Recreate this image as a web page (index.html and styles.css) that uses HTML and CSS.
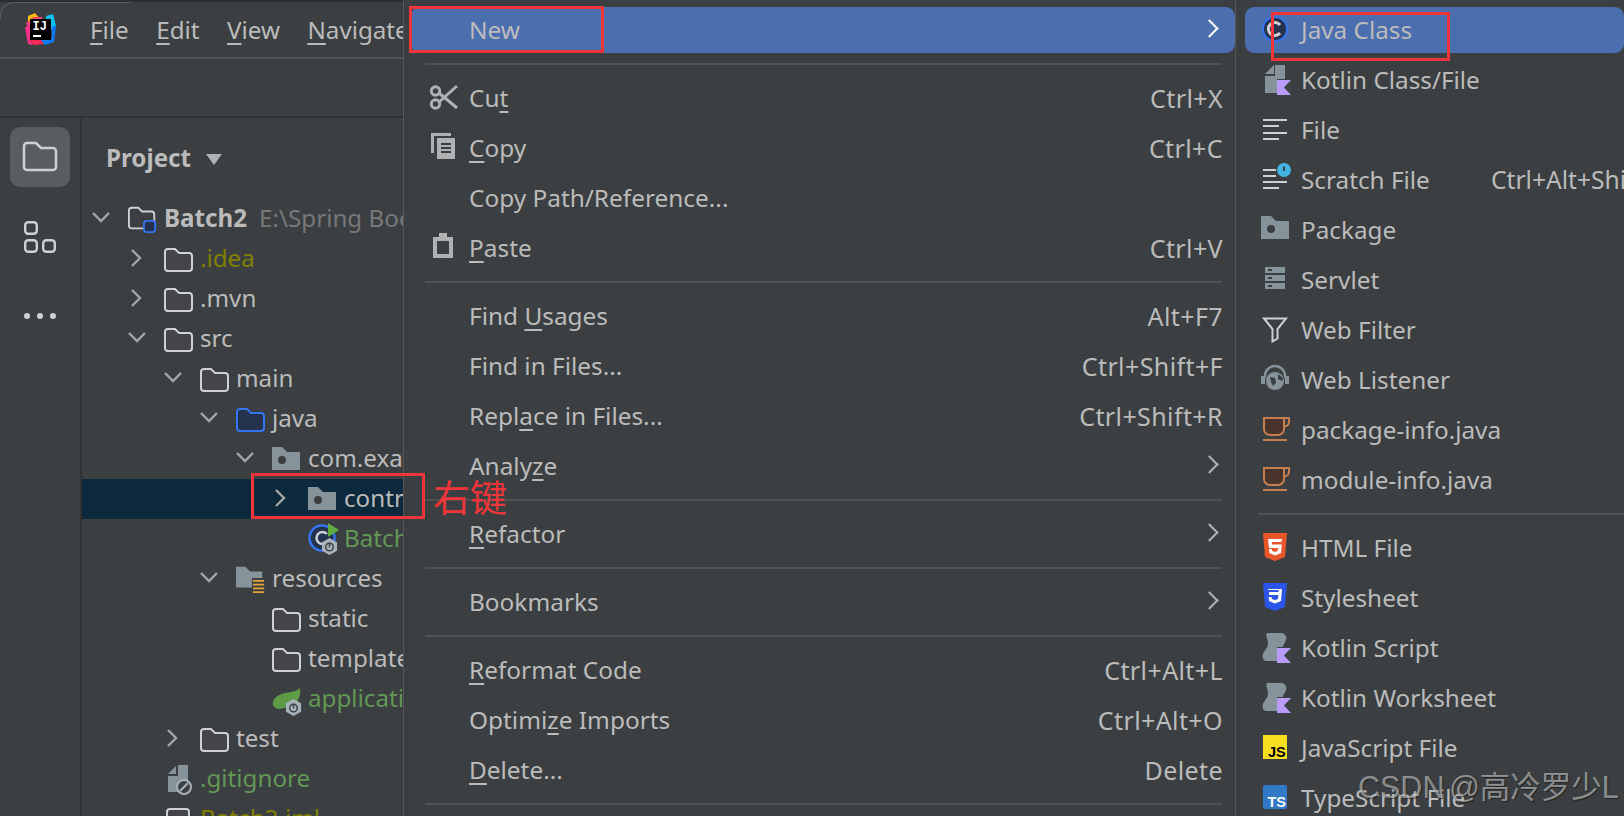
FILE: index.html
```html
<!DOCTYPE html>
<html lang="en">
<head>
<meta charset="utf-8">
<title>IntelliJ IDEA context menu</title>
<link rel="stylesheet" href="styles.css">
</head>
<body>
<svg class="sprite" aria-hidden="true">
  <symbol id="down" viewBox="0 0 36 30"><path d="M10 10l8 8 8-8" fill="none" stroke="#a3a6a9" stroke-width="2.4"/></symbol>
  <symbol id="right" viewBox="0 0 36 30"><path d="M13 7l8 8-8 8" fill="none" stroke="#a3a6a9" stroke-width="2.4"/></symbol>
  <symbol id="folder" viewBox="0 0 30 30"><path d="M4 6h7l4 4h10a3 3 0 0 1 3 3v12a3 3 0 0 1-3 3H4a3 3 0 0 1-3-3V9a3 3 0 0 1 3-3z" fill="#43454a" stroke="#ced0d6" stroke-width="2"/></symbol>
  <symbol id="jfolder" viewBox="0 0 30 30"><path d="M4 6h7l4 4h10a3 3 0 0 1 3 3v12a3 3 0 0 1-3 3H4a3 3 0 0 1-3-3V9a3 3 0 0 1 3-3z" fill="#25324d" stroke="#3574f0" stroke-width="2"/></symbol>
  <symbol id="pkg" viewBox="0 0 30 30"><path d="M0 4h10l5 5h13v18H0z" fill="#87939a"/><circle cx="10" cy="17" r="4" fill="#3c3f41"/></symbol>
  <symbol id="res" viewBox="0 0 32 32"><path d="M0 4h10l5 5h13v17H0z" fill="#87939a"/><path d="M17 16h15v17H17z" fill="#3c3f41"/><path d="M18 18h12v2H18zM18 22h12v2H18zM18 26h12v2H18zM18 30h12v2H18z" fill="#e2a63b"/></symbol>
  <symbol id="proj" viewBox="0 0 32 32"><path d="M4 5h7l4 4h10a3 3 0 0 1 3 3v12a3 3 0 0 1-3 3H4a3 3 0 0 1-3-3V8a3 3 0 0 1 3-3z" fill="none" stroke="#ced0d6" stroke-width="2"/><rect x="17" y="19" width="12" height="12" rx="3" fill="#25324d" stroke="#3574f0" stroke-width="2"/></symbol>
  <symbol id="gear" viewBox="0 0 18 18"><path d="M9 0l8 4.500v9L9 18l-8-4.500v-9z" fill="#a7b2ba"/><circle cx="9" cy="9.500" r="4" fill="none" stroke="#3c3f41" stroke-width="1.500"/><path d="M9 5v5" stroke="#3c3f41" stroke-width="1.500"/></symbol>
  <symbol id="cup" viewBox="0 0 30 30"><path d="M3 3h20v11a6 6 0 0 1-6 6H9a6 6 0 0 1-6-6z" fill="#4a332a" stroke="#c57e4f" stroke-width="2"/><path d="M23 3h5v4a4 4 0 0 1-5 4" fill="none" stroke="#c57e4f" stroke-width="2"/><path d="M2 25h24" stroke="#c57e4f" stroke-width="2"/></symbol>
  <symbol id="kfile" viewBox="0 0 30 30"><path d="M4 9l9-9v9z" fill="#87939a"/><path d="M14 0h10v14h-8v14H4V11h10z" fill="#87939a"/><path d="M16 15h14l-7 7.500 7 7.500H16z" fill="#b99bf8"/></symbol>
  <symbol id="kscript" viewBox="0 0 30 30"><path d="M6 0h13c5 0 7 3 6 7-1 3-3 5-3.500 7H16v14H6c-4 0-5-3-4-7 1-3 5-6 5-11 0-4-3-7-1-10z" fill="#87939a"/><path d="M16 15h14l-7 7.500 7 7.500H16z" fill="#b99bf8"/></symbol>
</svg>

<div class="app">
  <section class="ide">
    <header class="titlebar">
      <svg class="logo" viewBox="0 0 34 34" aria-hidden="true">
        <path d="M4 3l7-3 5 6-9 6-3-1z" fill="#fdb60d"/><path d="M2 10l8-6h8v3L4 15z" fill="#fb3d7c"/>
        <path d="M22 3l7-2 3 12-4 4-6-4z" fill="#07c3f2"/><path d="M28 13l4 0-2 16-9 3-5-5 12-2z" fill="#087cfa"/>
        <path d="M1 14l5-1v14l3 5-5-1z" fill="#ff318c"/><path d="M5 27h12l3 4-10 1z" fill="#fe2857"/>
        <rect x="6" y="6" width="21" height="21" fill="#000"/>
        <text x="8.500" y="16.500" class="logo-t">IJ</text><rect x="9" y="22" width="8" height="2" fill="#fff"/>
      </svg>
      <nav class="menubar">
        <span><u>F</u>ile</span><span><u>E</u>dit</span><span><u>V</u>iew</span><span><u>N</u>avigate</span>
      </nav>
    </header>
    <div class="toolbar"></div>
    <div class="body">
      <aside class="strip">
        <div class="strip-btn active">
          <svg class="strip-ic" viewBox="0 0 36 32" aria-hidden="true"><path d="M5 2h9l5 5h12a3 3 0 0 1 3 3v16a3 3 0 0 1-3 3H5a3 3 0 0 1-3-3V5a3 3 0 0 1 3-3z" fill="none" stroke="#ced0d6" stroke-width="2.500"/></svg>
        </div>
        <div class="strip-btn">
          <svg class="strip-grid" viewBox="0 0 32 32" aria-hidden="true"><g fill="none" stroke="#ced0d6" stroke-width="2.400"><rect x="1.200" y="1.200" width="11.600" height="11.600" rx="3"/><rect x="1.200" y="19.200" width="11.600" height="11.600" rx="3"/><rect x="19.200" y="19.200" width="11.600" height="11.600" rx="3"/></g></svg>
        </div>
        <div class="strip-dots"><i></i><i></i><i></i></div>
      </aside>
      <div class="panel">
        <div class="panel-head"><span class="panel-title">Project</span><span class="caret"></span></div>
        <div class="tree">
          <div class="row l0"><svg class="chev"><use href="#down"/></svg><svg class="ti"><use href="#proj"/></svg><b class="strong">Batch2</b><span class="hint">E:\Spring Boot\Batch2</span></div>
          <div class="row l1"><svg class="chev"><use href="#right"/></svg><svg class="ti"><use href="#folder"/></svg><span class="olive">.idea</span></div>
          <div class="row l1"><svg class="chev"><use href="#right"/></svg><svg class="ti"><use href="#folder"/></svg><span>.mvn</span></div>
          <div class="row l1"><svg class="chev"><use href="#down"/></svg><svg class="ti"><use href="#folder"/></svg><span>src</span></div>
          <div class="row l2"><svg class="chev"><use href="#down"/></svg><svg class="ti"><use href="#folder"/></svg><span>main</span></div>
          <div class="row l3"><svg class="chev"><use href="#down"/></svg><svg class="ti"><use href="#jfolder"/></svg><span>java</span></div>
          <div class="row l4"><svg class="chev"><use href="#down"/></svg><svg class="ti"><use href="#pkg"/></svg><span>com.example.batch2</span></div>
          <div class="row l5 selected"><svg class="chev"><use href="#right"/></svg><svg class="ti"><use href="#pkg"/></svg><span>controller</span></div>
          <div class="row l5"><span class="chev"></span>
            <svg class="ti" viewBox="0 0 30 30" aria-hidden="true"><circle cx="14" cy="15" r="12.500" fill="#25324d" stroke="#3574f0" stroke-width="2.500"/><path d="M19 11a6 6 0 1 0 0 8" fill="none" stroke="#ced0d6" stroke-width="2.500"/><path d="M20 0l11 7-11 7z" fill="#5fad41"/><use href="#gear" x="13" y="15" width="17" height="17"/></svg>
            <span class="green">Batch2Application</span></div>
          <div class="row l3"><svg class="chev"><use href="#down"/></svg><svg class="ti"><use href="#res"/></svg><span>resources</span></div>
          <div class="row l4"><span class="chev"></span><svg class="ti"><use href="#folder"/></svg><span>static</span></div>
          <div class="row l4"><span class="chev"></span><svg class="ti"><use href="#folder"/></svg><span>templates</span></div>
          <div class="row l4"><span class="chev"></span>
            <svg class="ti" viewBox="0 0 30 30" aria-hidden="true"><path d="M28 5c1 7-1 13-7 17-3 2-6 3-9 3l-4 1c-5 0-8-3-7-7 1-4 6-8 12-9 7-1 12-2 15-5z" fill="#5d9b47"/><use href="#gear" x="13" y="16" width="17" height="17"/></svg>
            <span class="green">application.properties</span></div>
          <div class="row l2"><svg class="chev"><use href="#right"/></svg><svg class="ti"><use href="#folder"/></svg><span>test</span></div>
          <div class="row l1"><span class="chev"></span>
            <svg class="ti" viewBox="0 0 30 30" aria-hidden="true"><path d="M4 11l8-8v8zM14 2h10v18h-8v9H4V13h10z" fill="#87939a"/><circle cx="20" cy="24" r="7" fill="#3c3f41" stroke="#a7b2ba" stroke-width="2"/><path d="M16 28l8-8" stroke="#a7b2ba" stroke-width="2"/></svg>
            <span class="green">.gitignore</span></div>
          <div class="row l1"><span class="chev"></span>
            <svg class="ti" viewBox="0 0 30 30" aria-hidden="true"><rect x="3" y="6" width="22" height="24" rx="3" fill="#43454a" stroke="#ced0d6" stroke-width="2"/></svg>
            <span class="olive">Batch2.iml</span></div>
        </div>
      </div>
    </div>
  </section>

  <section class="menu">
    <div class="mi hl"><span class="ic"></span><span class="lb">New</span><span class="arrow white"></span></div>
    <div class="sep"></div>
    <div class="mi"><span class="ic"><svg viewBox="0 0 30 30" aria-hidden="true"><g fill="none" stroke="#afb1b3" stroke-width="3"><circle cx="8.500" cy="8" r="4.200"/><circle cx="8.500" cy="21" r="4.200"/><path d="M12 10l18 15M12 19L30 3"/></g></svg></span><span class="lb">Cu<u>t</u></span><span class="sc">Ctrl+X</span></div>
    <div class="mi"><span class="ic"><svg viewBox="0 0 30 30" aria-hidden="true"><path d="M4 0h20v3H7v17H4z" fill="#afb1b3"/><path d="M10 5h18v21H10z" fill="#afb1b3"/><path d="M14 10h10v2H14zM14 14h10v2H14zM14 18h10v2H14z" fill="#3c3f41"/></svg></span><span class="lb"><u>C</u>opy</span><span class="sc">Ctrl+C</span></div>
    <div class="mi"><span class="ic"></span><span class="lb">Copy Path/Reference...</span></div>
    <div class="mi"><span class="ic"><svg viewBox="0 0 30 30" aria-hidden="true"><path d="M6 4h6V0h8v4h6v21H6z" fill="#afb1b3"/><path d="M10 8h12v13H10z" fill="#3c3f41"/></svg></span><span class="lb"><u>P</u>aste</span><span class="sc">Ctrl+V</span></div>
    <div class="sep"></div>
    <div class="mi"><span class="ic"></span><span class="lb">Find <u>U</u>sages</span><span class="sc">Alt+F7</span></div>
    <div class="mi"><span class="ic"></span><span class="lb">Find in Files...</span><span class="sc">Ctrl+Shift+F</span></div>
    <div class="mi"><span class="ic"></span><span class="lb">Repl<u>a</u>ce in Files...</span><span class="sc">Ctrl+Shift+R</span></div>
    <div class="mi"><span class="ic"></span><span class="lb">Analy<u>z</u>e</span><span class="arrow"></span></div>
    <div class="sep"></div>
    <div class="mi"><span class="ic"></span><span class="lb"><u>R</u>efactor</span><span class="arrow"></span></div>
    <div class="sep"></div>
    <div class="mi"><span class="ic"></span><span class="lb">Bookmarks</span><span class="arrow"></span></div>
    <div class="sep"></div>
    <div class="mi"><span class="ic"></span><span class="lb"><u>R</u>eformat Code</span><span class="sc">Ctrl+Alt+L</span></div>
    <div class="mi"><span class="ic"></span><span class="lb">Optimi<u>z</u>e Imports</span><span class="sc">Ctrl+Alt+O</span></div>
    <div class="mi"><span class="ic"></span><span class="lb"><u>D</u>elete...</span><span class="sc">Delete</span></div>
    <div class="sep"></div>
  </section>

  <section class="menu sub">
    <div class="mi hl"><span class="ic"><svg viewBox="0 0 30 30" aria-hidden="true"><circle cx="14" cy="14" r="12" fill="#25324d" stroke="#3574f0" stroke-width="2"/><path d="M19 10a6.500 6.500 0 1 0 0 8" fill="none" stroke="#ced0d6" stroke-width="3"/></svg></span><span class="lb">Java Class</span></div>
    <div class="mi"><span class="ic"><svg viewBox="0 0 30 30" aria-hidden="true"><use href="#kfile"/></svg></span><span class="lb">Kotlin Class/File</span></div>
    <div class="mi"><span class="ic"><svg viewBox="0 0 30 30" aria-hidden="true"><path d="M2 4h24v2H2zM2 10h16v2H2zM2 17h24v2H2zM2 23h16v2H2z" fill="#ced0d6"/></svg></span><span class="lb">File</span></div>
    <div class="mi"><span class="ic"><svg viewBox="0 0 30 30" aria-hidden="true"><path d="M2 4h13v2H2zM2 10h13v2H2zM2 16h24v2H2zM2 22h16v2H2z" fill="#ced0d6"/><circle cx="23" cy="5" r="7" fill="#3fb5e0"/><path d="M23 1.500V6" stroke="#3c3f41" stroke-width="2"/></svg></span><span class="lb">Scratch File</span><span class="sc clip">Ctrl+Alt+Shift+Insert</span></div>
    <div class="mi"><span class="ic up"><svg viewBox="0 0 30 30" aria-hidden="true"><use href="#pkg"/></svg></span><span class="lb">Package</span></div>
    <div class="mi"><span class="ic"><svg viewBox="0 0 30 30" aria-hidden="true"><path d="M4 2h20v6H4zM4 10h20v6H4zM4 18h20v6H4z" fill="#87939a"/><path d="M7 4h4v2H7zM7 12h4v2H7zM7 20h4v2H7z" fill="#3c3f41"/></svg></span><span class="lb">Servlet</span></div>
    <div class="mi"><span class="ic"><svg viewBox="0 0 30 30" aria-hidden="true"><path d="M3 3.500h22l-8.500 10.500v9.500l-5 3V14z" fill="none" stroke="#ced0d6" stroke-width="2"/></svg></span><span class="lb">Web Filter</span></div>
    <div class="mi"><span class="ic"><svg viewBox="0 0 30 30" aria-hidden="true"><path d="M4 14v-3a10 10 0 0 1 20 0v3" fill="none" stroke="#87939a" stroke-width="2.500"/><rect x="0" y="11" width="4" height="8" fill="#87939a"/><rect x="24" y="11" width="4" height="8" fill="#87939a"/><circle cx="14" cy="16" r="9.500" fill="#87939a" stroke="#3c3f41" stroke-width="1"/><path d="M9 12l5 1 1 5-3 3-2-4zM17 9l5 4-1 3-4-2z" fill="#3c3f41"/></svg></span><span class="lb">Web Listener</span></div>
    <div class="mi"><span class="ic"><svg viewBox="0 0 30 30" aria-hidden="true"><use href="#cup"/></svg></span><span class="lb">package-info.java</span></div>
    <div class="mi"><span class="ic"><svg viewBox="0 0 30 30" aria-hidden="true"><use href="#cup"/></svg></span><span class="lb">module-info.java</span></div>
    <div class="sep"></div>
    <div class="mi"><span class="ic"><svg viewBox="0 0 30 30" aria-hidden="true"><path d="M2 0h24l-2 24-10 4-10-4z" fill="#e8572a"/><path d="M21 6H7l1 9h9l-.3 3-2.700 1-3-1-.2-2H8l.4 4 5.600 2.500 6-2.500.8-8.500H11l-.2-2.500H20.600z" fill="#fff"/></svg></span><span class="lb">HTML File</span></div>
    <div class="mi"><span class="ic"><svg viewBox="0 0 30 30" aria-hidden="true"><path d="M2 0h24l-2 24-10 4-10-4z" fill="#2a55e8"/><path d="M7 6h14l-1 12-6 2.500-6-2.500-.4-4h3l.2 2 3.200 1 3-1 .3-4H8v-3h9.500l.2-2H7z" fill="#fff"/></svg></span><span class="lb">Stylesheet</span></div>
    <div class="mi"><span class="ic"><svg viewBox="0 0 30 30" aria-hidden="true"><use href="#kscript"/></svg></span><span class="lb">Kotlin Script</span></div>
    <div class="mi"><span class="ic"><svg viewBox="0 0 30 30" aria-hidden="true"><use href="#kscript"/></svg></span><span class="lb">Kotlin Worksheet</span></div>
    <div class="mi"><span class="ic"><svg viewBox="0 0 30 30" aria-hidden="true"><rect x="2" y="2" width="24" height="24" fill="#f7df1e"/><text x="7" y="24" class="badge-t dark">JS</text></svg></span><span class="lb">JavaScript File</span></div>
    <div class="mi"><span class="ic"><svg viewBox="0 0 30 30" aria-hidden="true"><rect x="2" y="2" width="24" height="24" rx="2" fill="#3178c6"/><text x="6.500" y="24" class="badge-t">TS</text></svg></span><span class="lb">TypeScript File</span></div>
  </section>
</div>

<div class="mark mark-tree"></div>
<div class="mark mark-new"></div>
<div class="mark mark-java"></div>
<div class="note">右键</div>
<div class="watermark">CSDN @高冷罗少L</div>
</body>
</html>
```
FILE: styles.css
```css
* { box-sizing: border-box; }
html, body { margin: 0; padding: 0; }
body {
  position: relative;
  width: 1624px;
  height: 816px;
  overflow: hidden;
  background: #3c3f41;
  color: #bbbbbb;
  font: 24.2px/30px "Noto Sans", "Open Sans", sans-serif;
}
u { text-decoration-thickness: 2px; text-underline-offset: 4px; text-decoration-skip-ink: none; }
svg { display: block; flex: none; overflow: visible; }
.sprite { position: absolute; width: 0; height: 0; }

.app { display: flex; height: 816px; }

.ide { width: 404px; flex: none; border-right: 1px solid #555759; overflow: hidden; display: flex; flex-direction: column; }
.titlebar { position: relative; height: 59px; flex: none; display: flex; align-items: center; padding: 0 0 0 24px; border-top: 2px solid #2b2d30; border-bottom: 2px solid #4e5052; }
.titlebar::before { content: ""; position: absolute; left: 0; top: 0; width: 130px; height: 16px; border-top: 1px solid #5a5d60; border-left: 1px solid #5a5d60; border-top-left-radius: 14px; }
.logo { width: 34px; height: 34px; margin-right: 32px; }
.logo-t { font: bold 12px "Liberation Mono", monospace; fill: #fff; }
.menubar { display: flex; gap: 27.5px; white-space: nowrap; }
.toolbar { height: 59px; flex: none; border-bottom: 2px solid #323232; }
.body { flex: 1; display: flex; min-height: 0; }
.strip { width: 82px; flex: none; border-right: 2px solid #323232; display: flex; flex-direction: column; align-items: flex-start; padding: 9px 0 0 10px; gap: 20px; }
.strip-btn { width: 60px; height: 60px; border-radius: 10px; display: flex; align-items: center; justify-content: center; }
.strip-btn.active { background: #5a5d5f; }
.strip-ic { width: 36px; height: 32px; }
.strip-grid { width: 32px; height: 32px; }
.strip-dots { display: flex; gap: 7px; padding: 26px 0 0 14px; }
.strip-dots i { width: 6px; height: 6px; border-radius: 50%; background: #ced0d6; }

.panel { flex: 1; min-width: 0; display: flex; flex-direction: column; }
.panel-head { height: 81px; flex: none; display: flex; align-items: center; padding: 0 0 2px 24px; }
.panel-title { font-weight: 700; }
.caret { width: 0; height: 0; margin: 3px 0 0 15px; border-left: 8.5px solid transparent; border-right: 8.5px solid transparent; border-top: 11px solid #afb1b3; }
.tree { white-space: nowrap; overflow: hidden; }
.row { height: 40px; display: flex; align-items: center; padding-bottom: 2px; }
.l0 { padding-left: 1px; }
.l1 { padding-left: 37px; }
.l2 { padding-left: 73px; }
.l3 { padding-left: 109px; }
.l4 { padding-left: 145px; }
.l5 { padding-left: 181px; }
.selected { background: #0d293e; }
.chev { width: 36px; height: 30px; margin-right: 9px; flex: none; }
.ti { width: 30px; height: 30px; margin-right: 6px; }
.strong { font-weight: 700; }
.hint { color: #787878; margin-left: 12px; }
.olive { color: #808000; }
.green { color: #629755; }

.menu { width: 832px; flex: none; padding-top: 5px; border-right: 1px solid #555759; font-size: 24.4px; }
.mi { height: 50px; display: flex; align-items: center; margin-left: 7px; padding-left: 16px; padding-right: 12px; white-space: nowrap; }
.mi.hl { height: 46px; margin-top: 2px; margin-bottom: 2px; background: #4b6eaf; border-radius: 9px; }
.ic { width: 42px; flex: none; display: flex; align-items: center; }
.ic svg { width: 30px; height: 30px; }
.ic.up { margin-bottom: 6px; }
.lb { flex: 1; }
.sc { flex: none; font-size: 25px; letter-spacing: .4px; }
.arrow { width: 13px; height: 13px; margin: 0 7px 4px 0; border-top: 2.6px solid #afb1b3; border-right: 2.6px solid #afb1b3; transform: rotate(45deg); }
.arrow.white { border-color: #fff; }
.sep { height: 2px; margin: 8px 13px 8px 21px; background: #515151; }
.hl + .sep { margin-top: 10px; }

.sub { flex: 1; min-width: 0; width: auto; border-right: 0; overflow: hidden; padding-left: 1px; font-size: 24.3px; }
.sub .mi { margin-left: 8px; padding-right: 0; }
.sub .ic { width: 40px; }
.sub .lb { flex: none; width: 190px; }
.sub .sep { margin-right: 0; }
.sub .sc { font-size: 24.6px; letter-spacing: 0; overflow: hidden; }
.badge-t { font: bold 14.5px "Liberation Sans", sans-serif; fill: #fff; }
.badge-t.dark { fill: #000; }

.mark { position: absolute; border: 3px solid #f0363a; }
.mark-tree { left: 251px; top: 473px; width: 174px; height: 46px; }
.mark-new { left: 409px; top: 6px; width: 195px; height: 47px; }
.mark-java { left: 1271px; top: 12px; width: 179px; height: 49px; }
.note { position: absolute; left: 433px; top: 473px; color: #f0363a; font: 37px/46px "Noto Sans CJK SC", sans-serif; }
.watermark { position: absolute; left: 1358px; top: 768px; color: rgba(205, 205, 205, .62); font: 30.5px/38px "Liberation Sans", "Noto Sans CJK SC", sans-serif; word-spacing: -4px; text-shadow: 1px 1px 1px rgba(0, 0, 0, .45); white-space: nowrap; }
```
